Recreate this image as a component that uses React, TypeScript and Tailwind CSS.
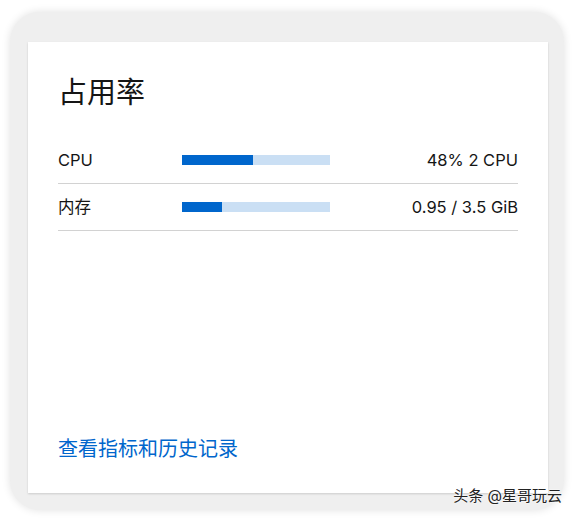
const rows = [
  { label: "CPU", used: 0.48, value: "48% 2 CPU" },
  { label: "内存", used: 0.95 / 3.5, value: "0.95 / 3.5 GiB" },
];

function UsageBar({ used }: { used: number }) {
  return (
    <div className="h-[10px] w-[148px] bg-[#cadff4]">
      <div className="h-full bg-[#0066cc]" style={{ width: `${used * 100}%` }} />
    </div>
  );
}

export default function App() {
  return (
    <div
      className="h-[520px] w-[574px] bg-white pl-[10px] pt-[12px] text-[#151515]"
      style={{ fontFamily: 'Inter, "Noto Sans CJK SC", sans-serif' }}
    >
      <div className="relative h-[498px] w-[554px] rounded-[30px] bg-[#efefef] pl-[18px] pt-[30px] shadow-[0_0_8px_rgba(0,0,0,0.12)]">
        <div className="flex h-[451px] w-[520px] flex-col bg-white px-[30px] pb-[32px] pt-[34px] shadow-[0_1px_2px_rgba(0,0,0,0.15)]">
          <h2 className="text-[29px] leading-[34px]">占用率</h2>

          <div className="mt-[27px]">
            {rows.map((row) => (
              <div
                key={row.label}
                className="flex h-[47px] items-center border-b border-[#d2d2d2] text-[16.5px]"
              >
                <span className="w-[124px]">{row.label}</span>
                <UsageBar used={row.used} />
                <span className="flex-1 text-right">{row.value}</span>
              </div>
            ))}
          </div>

          <a className="mt-auto text-[20px] leading-[24px] text-[#0066cc]" href="#">
            查看指标和历史记录
          </a>
        </div>

        <span className="absolute bottom-[3px] right-[2px] text-[15px] text-[#222] [text-shadow:0_0_2px_#fff,0_0_2px_#fff]">
          头条 @星哥玩云
        </span>
      </div>
    </div>
  );
}
